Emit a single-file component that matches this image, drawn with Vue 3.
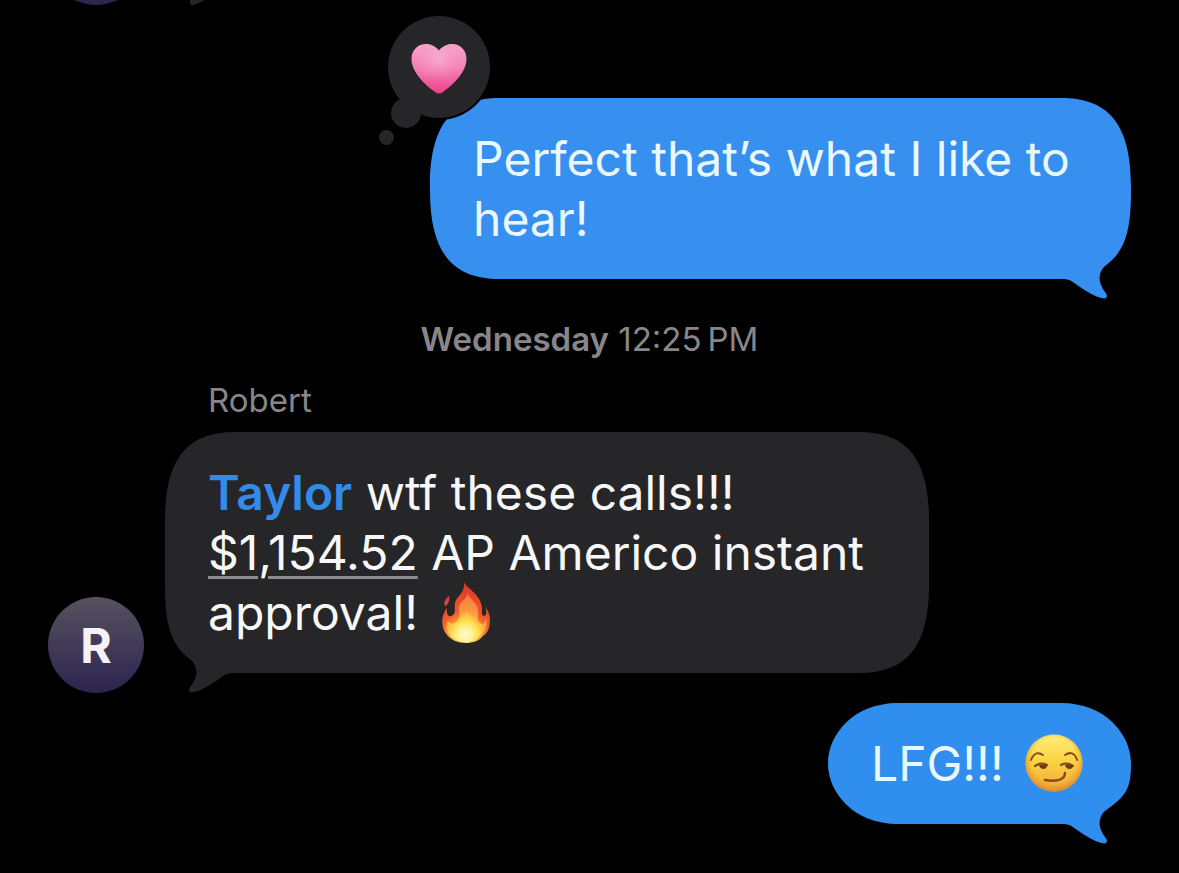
<script setup>
// Outline of a message bubble with its tail at the lower right.
function bubblePath(w, h) {
  const side = Math.min(88, h / 2)
  const pull = side < 80 ? 31 : 22
  return [
    `M70 0H${w - 70}`,
    `C${w - 26} 0 ${w} ${pull} ${w} ${side}`,
    `V${h - side}`,
    `C${w} ${h - side * 0.57} ${w - 5} ${h - 28} ${w - 26} ${h - 13}`,
    `C${w - 32} ${h - 8} ${w - 33} ${h + 1} ${w - 29} ${h + 8}`,
    `C${w - 27} ${h + 13} ${w - 22} ${h + 16} ${w - 25} ${h + 19}`,
    `C${w - 29} ${h + 22} ${w - 47} ${h + 11} ${w - 54} ${h + 6}`,
    `C${w - 59} ${h + 2} ${w - 62} ${h} ${w - 67} ${h}`,
    `H70C26 ${h} 0 ${h - pull} 0 ${h - side}`,
    `V${side}C0 ${pull} 26 0 70 0Z`,
  ].join('')
}
const shapes = {
  perfect: bubblePath(701, 181),
  calls: bubblePath(764, 241),
  lfg: bubblePath(303, 121),
}
</script>

<template>
  <main class="chat">
    <div class="previous" aria-hidden="true">
      <div class="avatar"></div>
      <svg class="previous-tail" width="20" height="5" viewBox="0 0 20 5"><path d="M2 0H17L8 4Q2 7 2 2Z" fill="#262628" /></svg>
    </div>

    <article class="bubble sent wide">
      <svg class="shape" viewBox="0 0 701 181" preserveAspectRatio="none" aria-hidden="true"><path :d="shapes.perfect" fill="#378ff0" /></svg>
      <p>Perfect that’s what I like to hear!</p>
      <svg class="reaction" viewBox="0 0 112 134" role="img" aria-label="Loved">
        <defs>
          <linearGradient id="heart" x1="0" y1="0" x2="0" y2="1">
            <stop offset="0" stop-color="#f6a5ca" /><stop offset=".5" stop-color="#f27fb5" /><stop offset="1" stop-color="#ee3f88" />
          </linearGradient>
          <radialGradient id="heartGlow" cx=".5" cy=".3" r=".5">
            <stop offset="0" stop-color="#f9bdd8" stop-opacity=".6" /><stop offset="1" stop-color="#f58dbc" stop-opacity="0" />
          </radialGradient>
        </defs>
        <circle cx="59" cy="53" r="53" fill="#000" />
        <circle cx="59" cy="53" r="51" fill="#262628" />
        <circle cx="26" cy="99" r="15" fill="#262628" />
        <circle cx="6.500" cy="123.500" r="7.500" fill="#262628" />
        <path d="M59 36.500C55 31.500 50 30 46 30C38 30 31.500 36 31.500 45C31.500 58 45 71 55 78Q59 81 63 78C73 71 86.500 58 86.500 45C86.500 36 80 30 72 30C68 30 63 31.500 59 36.500Z" fill="url(#heart)" />
        <path d="M59 36.500C55 31.500 50 30 46 30C38 30 31.500 36 31.500 45C31.500 58 45 71 55 78Q59 81 63 78C73 71 86.500 58 86.500 45C86.500 36 80 30 72 30C68 30 63 31.500 59 36.500Z" fill="url(#heartGlow)" />
      </svg>
    </article>

    <time class="stamp"><b>Wednesday</b> 12:25&#8239;PM</time>

    <div class="sender">Robert</div>
    <div class="row">
      <div class="avatar">R</div>
      <article class="bubble received">
        <svg class="shape mirrored" viewBox="0 0 764 241" preserveAspectRatio="none" aria-hidden="true"><path :d="shapes.calls" fill="#262628" /></svg>
        <p>
          <span class="mention">Taylor</span> wtf these calls!!!<br />
          <a href="#">$1,154.52</a> AP Americo instant
          <span class="ending">approval!
          <svg class="fire" viewBox="0 0 50 62" role="img" aria-label="Fire">
            <defs>
              <radialGradient id="flame" gradientUnits="userSpaceOnUse" cx="24" cy="56" r="52">
                <stop offset="0" stop-color="#fff49a" /><stop offset=".25" stop-color="#fdb33c" /><stop offset=".5" stop-color="#ef5a2c" /><stop offset="1" stop-color="#dc3826" />
              </radialGradient>
              <radialGradient id="flameCore" gradientUnits="userSpaceOnUse" cx="24" cy="54" r="44">
                <stop offset="0" stop-color="#fffff0" /><stop offset=".14" stop-color="#fff9b4" /><stop offset=".3" stop-color="#ffdf4e" /><stop offset=".55" stop-color="#fb983b" /><stop offset="1" stop-color="#f2714c" />
              </radialGradient>
            </defs>
            <path d="M8 15C4 18 2 22 4 25C8 23 9 19 8 15Z" fill="#cf4937" />
            <path d="M23 1C26 8 40 13 41 27C41 31 40 34 43 35C46 34 46 30 44 26C49 31 50 39 48 47C47 50 45 53 42 55C38 60 32 62 25 62C17 62 10 59 6 54C2 49 0 42 2 35C3 31 5 28 6 27C5 34 8 37 12 34C16 30 12 25 15 19C19 13 24 10 23 1Z" fill="url(#flame)" />
            <path d="M26 12C29 19 38 22 37 32C37 38 36 41 41 43C44 42 45 39 45 36C48 46 42 52 38 56C34 60 30 61 25 61C15 61 7 55 6 48C5 44 6 41 7 39C8 43 13 44 17 39C21 33 16 29 19 23C22 19 26 18 26 12Z" fill="url(#flameCore)" />
            <path d="M26 29C27 37 35 39 36 48C36 53 40 51 41 51C38 58 31 61 25 61C16 61 11 57 9 51C15 54 16 50 18 43C20 38 25 36 26 29Z" fill="#ffec69" opacity=".25" />
          </svg></span>
        </p>
      </article>
    </div>

    <article class="bubble sent short">
      <svg class="shape" viewBox="0 0 303 121" preserveAspectRatio="none" aria-hidden="true"><path :d="shapes.lfg" fill="#308eef" /></svg>
      <p>
        LFG!!!
        <svg class="smirk" viewBox="0 0 58 58" role="img" aria-label="Smirking face">
          <defs>
            <linearGradient id="face" x1="0" y1="0" x2="0" y2="1">
              <stop offset="0" stop-color="#fff07c" /><stop offset=".45" stop-color="#fcd344" /><stop offset="1" stop-color="#f3a638" />
            </linearGradient>
            <radialGradient id="rim" cx=".5" cy=".45" r=".56">
              <stop offset=".7" stop-color="#eda32f" stop-opacity="0" /><stop offset="1" stop-color="#db8425" />
            </radialGradient>
          </defs>
          <circle cx="29" cy="29" r="28.500" fill="url(#face)" />
          <circle cx="29" cy="29" r="28.500" fill="url(#rim)" />
          <g fill="none" stroke="#805018" stroke-linecap="round">
            <path d="M6 26C9 18 14 18 18 21" stroke-width="2" />
            <path d="M40 21C44 18 50 18 52 26" stroke-width="2" />
            <path d="M10 32Q16 28 22 31" stroke-width="2.200" />
            <path d="M36 31Q42 28 48 32" stroke-width="2.200" />
            <path d="M20 46C31 48 40 46 40 39" stroke-width="2.400" />
          </g>
          <path d="M14 31H22Q22 35 18.500 35Q15 35 14 31ZM40 31H48Q48 35 44.500 35Q41 35 40 31Z" fill="#693d15" />
        </svg>
      </p>
    </article>
  </main>
</template>

<style>
body { background: #000; }
</style>

<style scoped>
.chat {
  display: flex;
  flex-direction: column;
  padding: 0 48px 28px;
  color: #f7f7f8;
  font: 400 48px/60px Inter, "Liberation Sans", sans-serif;
}
p { margin: 0; position: relative; }
.previous {
  display: flex;
  align-items: flex-end;
  gap: 44px;
  height: 5px;
  overflow: hidden;
}
.avatar {
  flex: none;
  width: 96px;
  height: 96px;
  border-radius: 50%;
  background: linear-gradient(#56515f, #2d2450);
  color: #f4f2f8;
  font-weight: 700;
  line-height: 98px;
  text-align: center;
}
.bubble {
  position: relative;
  box-sizing: border-box;
  max-width: 100%;
  padding: 31px 42px 30px 43px;
}
.shape {
  position: absolute;
  inset: 0;
  width: 100%;
  height: 100%;
  overflow: visible;
}
.mirrored { transform: scaleX(-1); }
.sent { align-self: flex-end; color: #e9f7ff; }
.wide { width: 701px; margin-top: 93px; }
.short { width: 303px; margin-top: 10px; }
.reaction {
  position: absolute;
  left: -50px;
  top: -84px;
  width: 112px;
  height: 134px;
  overflow: visible;
}
.stamp {
  margin-top: 40px;
  color: #87878b;
  font-size: 33px;
  line-height: 40px;
  text-align: center;
}
.stamp b { font-weight: 600; }
.sender {
  margin: 21px 0 12px 160px;
  color: #87878b;
  font-size: 33px;
  line-height: 40px;
}
.row {
  display: flex;
  align-items: flex-end;
  gap: 21px;
}
.received { width: 764px; margin-bottom: 20px; }
.mention { color: #338be9; font-weight: 600; }
a {
  color: inherit;
  text-decoration: underline 3px #8d8d8f;
  text-underline-offset: 6px;
}
.ending { white-space: nowrap; }
.fire, .smirk { margin: -10px 0 -10px 8px; }
.fire { width: 50px; height: 62px; vertical-align: -3px; margin-left: 10px; }
.smirk { width: 58px; height: 58px; vertical-align: -1px; }
</style>
